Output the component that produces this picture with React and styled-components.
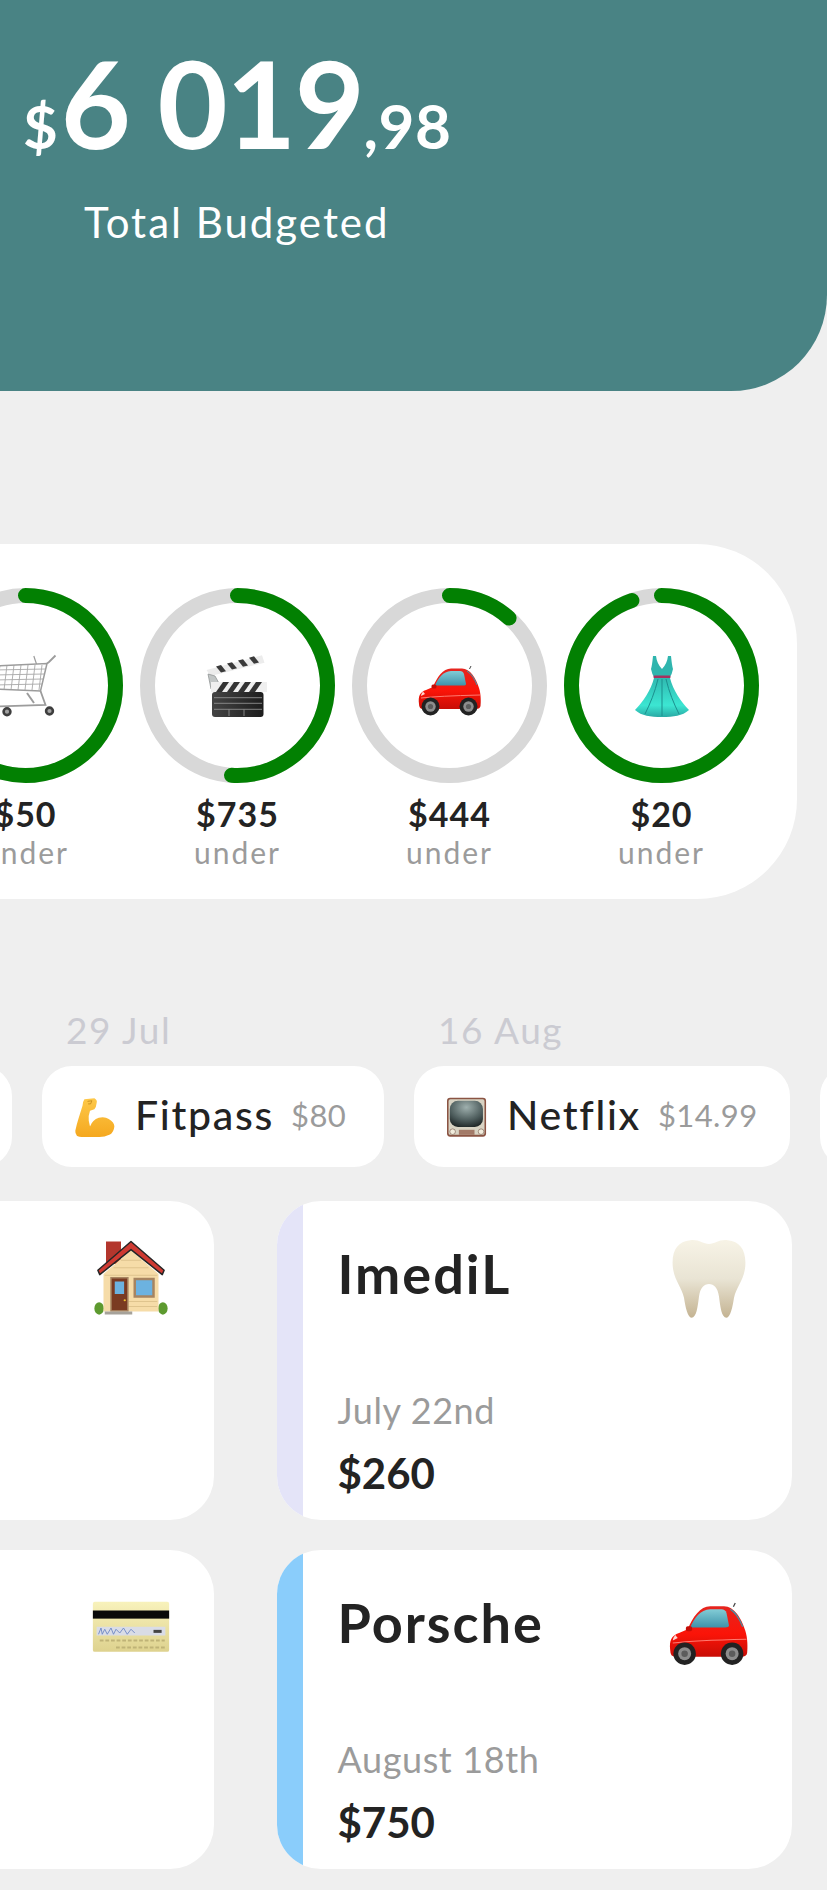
import React from 'react';
import styled, { createGlobalStyle } from 'styled-components';

const GlobalStyle = createGlobalStyle`
  html, body {
    margin: 0;
    padding: 0;
    background: #efefef;
    font-family: Lato, "Open Sans", sans-serif;
    overflow-x: hidden;
  }
`;

function CartIcon() {
  const bars = [0, 7, 14, 21, 28, 35, 42];
  const rows = [16, 21, 26, 31];
  return (
    <svg viewBox="0 0 64 64" width="100%" height="100%">
      <g fill="none" stroke="#a8a8a8" strokeWidth="0.9">
        {bars.map((x) => (
          <line key={x} x1={x + 6} y1="11" x2={x + 3} y2="36" />
        ))}
        {rows.map((y) => (
          <line key={y} x1="0" y1={y} x2={53 - (y - 10) * 0.25} y2={y - 1} />
        ))}
      </g>
      <g fill="none" stroke="#9c9c9c" strokeWidth="1.5">
        <path d="M0 12 L53 9.5 L46.5 37 L0 35" />
        <path d="M53 9.5 L55 8 L61.5 1.5" strokeWidth="1.8" />
        <path d="M39.8 2 L42.5 10" strokeWidth="1.2" />
        <path d="M46.5 37 L51.5 51 L0 52.5" strokeWidth="1.8" />
        <path d="M33 39 L40 49" strokeWidth="2" />
      </g>
      <g stroke="#3e3e3e" strokeWidth="2.6" fill="#a2a2a2">
        <circle cx="13" cy="57.7" r="3.4" />
        <circle cx="55.5" cy="57" r="3.4" />
      </g>
    </svg>
  );
}

function ClapperIcon() {
  const top = [10, 21, 32, 43];
  const band = [10, 21, 32, 43];
  return (
    <svg viewBox="0 0 64 64" width="100%" height="100%">
      <defs>
        <linearGradient id="clapBody" x1="0" x2="1" y1="0" y2="0">
          <stop offset="0" stopColor="#444" />
          <stop offset="1" stopColor="#1d1d1d" />
        </linearGradient>
      </defs>
      <polygon points="0.5,16 56,1.3 58.5,8.7 4.5,22" fill="#ececec" />
      {top.map((x) => {
        const y = 14 - (x - 4) * 0.265;
        return (
          <polygon
            key={x}
            points={`${x},${y} ${x + 5},${y - 1.3} ${x + 10},${y + 4.8} ${x + 5},${y + 6.1}`}
            fill="#3a3a3a"
          />
        );
      })}
      <polygon points="2,20 9,22 14.5,32 14,37 5,35" fill="#c2c6c6" stroke="#8a8e8e" strokeWidth="0.7" />
      <rect x="5" y="28" width="56" height="10" fill="#efefef" />
      {band.map((x) => (
        <polygon key={x} points={`${x},38 ${x + 6},38 ${x + 13},28 ${x + 7},28`} fill="#333" />
      ))}
      <rect x="6" y="38" width="51.5" height="25" rx="3" fill="url(#clapBody)" />
      <g stroke="#8f8f8f" strokeWidth="0.9">
        <line x1="8" y1="43.7" x2="56" y2="43.7" />
        <line x1="8" y1="49.3" x2="56" y2="49.3" />
        <line x1="8" y1="55.3" x2="56" y2="55.3" />
        <line x1="23" y1="55.3" x2="23" y2="62" />
        <line x1="38" y1="55.3" x2="38" y2="62" />
      </g>
    </svg>
  );
}

function CarIcon() {
  return (
    <svg viewBox="0 0 64 64" width="100%" height="100%">
      <defs>
        <linearGradient id="carBody" x1="0" x2="0" y1="0" y2="1">
          <stop offset="0" stopColor="#e5251f" />
          <stop offset="0.55" stopColor="#fb1408" />
          <stop offset="1" stopColor="#c80d06" />
        </linearGradient>
        <linearGradient id="carGlass" x1="0" x2="0" y1="0" y2="1">
          <stop offset="0" stopColor="#82ccd6" />
          <stop offset="1" stopColor="#3f93aa" />
        </linearGradient>
      </defs>
      <line x1="51.5" y1="15" x2="53" y2="12" stroke="#444" strokeWidth="1" />
      <path
        d="M1 50 C0 42 2 38 8 36 L15 33 C19 23 25 14.5 33 14.5 L44 14.5 C52 14.5 58 24 61 34 C63 40 63 48 62.5 52 Q62 55 58 55 L5 55 Q1 55 1 50 Z"
        fill="url(#carBody)"
      />
      <path
        d="M17 31.5 C20 24 25 17.5 33 17 L42 17 Q45 17 46 20 L48 30 Q48 31.5 45 31.5 Z"
        fill="url(#carGlass)"
      />
      <path d="M49 17 C54 20 57 26 59 31" fill="none" stroke="#3f93aa" strokeWidth="1" />
      <path d="M3 44 Q20 42 62 41" fill="none" stroke="#ff7a70" strokeWidth="1" />
      <path d="M5 37.5 Q3 40 3 42 L7 40 Z" fill="#ffd6d0" />
      <rect x="13.5" y="30.5" width="5" height="4" rx="1.5" fill="#c40d06" />
      <circle cx="12.5" cy="52.5" r="9" fill="#222" />
      <circle cx="12.5" cy="52.5" r="5.2" fill="#8d8d8d" />
      <circle cx="12.5" cy="52.5" r="2.6" fill="#5c5c5c" />
      <circle cx="50.5" cy="52.5" r="9" fill="#222" />
      <circle cx="50.5" cy="52.5" r="5.2" fill="#8d8d8d" />
      <circle cx="50.5" cy="52.5" r="2.6" fill="#5c5c5c" />
    </svg>
  );
}

function DressIcon() {
  return (
    <svg viewBox="0 0 64 64" width="100%" height="100%">
      <defs>
        <linearGradient id="dressSkirt" x1="0" x2="0" y1="0" y2="1">
          <stop offset="0" stopColor="#2fb9b0" />
          <stop offset="0.7" stopColor="#3ce6d2" />
          <stop offset="1" stopColor="#2aa9a4" />
        </linearGradient>
      </defs>
      <path
        d="M23 2 L26 2 Q27 10 32 15 Q37 10 38 2 L41 2 Q42 12 43 15 Q42 20 40 23 L24 23 Q22 20 21 15 Q22 12 23 2 Z"
        fill="#2fb5ae"
      />
      <rect x="23.5" y="21.5" width="17" height="2.8" rx="1" fill="#a8305f" />
      <path
        d="M24 24 L40 24 C43 36 51 48 59 56 C52 62 44 63 32 63 C20 63 12 62 5 56 C13 48 21 36 24 24 Z"
        fill="url(#dressSkirt)"
      />
      <g fill="none" stroke="#1c8f8e" strokeWidth="1">
        <path d="M28 25 C25 38 20 50 15 60" />
        <path d="M32 25 L32 62" />
        <path d="M36 25 C39 38 44 50 49 60" />
      </g>
    </svg>
  );
}

function MuscleIcon() {
  return (
    <svg viewBox="0 0 64 64" width="100%" height="100%">
      <defs>
        <linearGradient id="armFill" x1="0" x2="0" y1="0" y2="1">
          <stop offset="0" stopColor="#fdc849" />
          <stop offset="1" stopColor="#f5a81f" />
        </linearGradient>
      </defs>
      <path
        d="M15 3.5 L31 2 Q36 5 34.7 9 Q34 16 31 19.5 L24 22 Q21 30 22 38 L24 47 Q28 36 38 33 Q48 31 54 35 Q63 40 63 47 Q62 56 56 60 Q47 64 39 64 L15 64 Q5 64 3 62 Q0 58 0.5 54 Q3 42 6 33 L12 14 Q12 8 15 3.5 Z"
        fill="url(#armFill)"
      />
      <path d="M20 7 L27 6 L25 11 L21 11" fill="none" stroke="#b87d14" strokeWidth="1.1" />
    </svg>
  );
}

function TvIcon() {
  return (
    <svg viewBox="0 0 64 64" width="100%" height="100%">
      <defs>
        <radialGradient id="tvGlass" cx="0.5" cy="0.25" r="0.85">
          <stop offset="0" stopColor="#9fb0ae" />
          <stop offset="0.6" stopColor="#4b5a5a" />
          <stop offset="1" stopColor="#141a1a" />
        </radialGradient>
      </defs>
      <rect x="0" y="1" width="62.5" height="62.5" rx="5" fill="#8b5443" />
      <rect x="2.5" y="3.5" width="57.5" height="57" rx="3" fill="#d8d3c3" />
      <rect x="4.5" y="6" width="53" height="42" rx="13" fill="url(#tvGlass)" />
      <circle cx="9" cy="55.5" r="4.5" fill="#f1ecdc" stroke="#7a5f50" />
      <circle cx="54.5" cy="55.5" r="4.5" fill="#f1ecdc" stroke="#7a5f50" />
      <rect x="19" y="52.5" width="25" height="8" fill="#a37a68" />
    </svg>
  );
}

function HouseIcon() {
  return (
    <svg viewBox="0 0 64 64" width="100%" height="100%">
      <ellipse cx="6.5" cy="55.5" rx="3.8" ry="5" fill="#5d9a2f" />
      <ellipse cx="57.5" cy="55.5" rx="3.8" ry="5" fill="#5d9a2f" />
      <rect x="12" y="2" width="12" height="18" fill="#b3362d" />
      <path d="M32 9 L54 28 L54 58 L10 58 L10 28 Z" fill="#f6dca8" />
      <g stroke="#dcc08a" strokeWidth="0.7">
        <line x1="24" y1="17" x2="40" y2="17" />
        <line x1="18" y1="23" x2="46" y2="23" />
        <line x1="11" y1="29" x2="53" y2="29" />
        <line x1="30" y1="50" x2="53" y2="50" />
        <line x1="30" y1="54" x2="53" y2="54" />
      </g>
      <path
        d="M32 2 L58.5 25 L57 28.5 L32 8.5 L7 28.5 L5.5 25 Z"
        fill="#cf3a32"
        stroke="#262626"
        strokeWidth="1.2"
        strokeLinejoin="round"
      />
      <rect x="16" y="31" width="13.5" height="26.5" fill="#7a3a22" stroke="#a78460" strokeWidth="1.2" />
      <rect x="19" y="34" width="7.5" height="10" fill="#6cb2e0" />
      <circle cx="27" cy="49" r="0.9" fill="#f1c232" />
      <rect x="35" y="32" width="15" height="14" fill="#6cb2e0" stroke="#a78460" strokeWidth="2" />
      <rect x="11" y="58" width="22" height="2.4" fill="#a6a29a" />
    </svg>
  );
}

function ToothIcon() {
  return (
    <svg viewBox="0 0 64 64" width="100%" height="100%">
      <defs>
        <linearGradient id="toothFill" x1="0" x2="0" y1="0" y2="1">
          <stop offset="0" stopColor="#f7f3e6" />
          <stop offset="0.5" stopColor="#e9e4d4" />
          <stop offset="1" stopColor="#c4b392" />
        </linearGradient>
      </defs>
      <path
        d="M17 1 C24 0 27 4 32 4 C37 4 40 0 47 1 C57 2 62 9 61 22 C60 33 54 38 52 47 C51 54 49 63 46 63 C42 63 41 54 40 46 C39 39 36 36 32 36 C28 36 25 39 24 46 C23 54 22 63 18 63 C15 63 13 54 12 47 C10 38 4 33 3 22 C2 9 7 2 17 1 Z"
        fill="url(#toothFill)"
      />
    </svg>
  );
}

function CreditCardIcon() {
  return (
    <svg viewBox="0 0 64 64" width="100%" height="100%">
      <defs>
        <linearGradient id="cardFill" x1="0" x2="0" y1="0" y2="1">
          <stop offset="0" stopColor="#f8f2bb" />
          <stop offset="1" stopColor="#ded28e" />
        </linearGradient>
      </defs>
      <rect x="1.5" y="11" width="61" height="40" rx="1.5" fill="url(#cardFill)" />
      <rect x="1.5" y="18" width="61" height="6.5" fill="#0a0a0a" />
      <rect x="4.5" y="31" width="55" height="7" fill="#d9dce6" />
      <path
        d="M6 37 L8 32 L9 37 L11 33 L13 37 L16 32 L18 37 L20 33 L23 36 L26 32 L29 37 L32 33 L35 36"
        fill="none"
        stroke="#6c86c4"
        strokeWidth="0.7"
      />
      <rect x="50" y="33.5" width="6.5" height="2.4" fill="#444" />
      <g stroke="#bfb377" strokeWidth="1.6" strokeDasharray="3 1.5">
        <line x1="7" y1="42" x2="59" y2="42" />
        <line x1="20" y1="47.5" x2="59" y2="47.5" />
      </g>
    </svg>
  );
}

const RINGS = [
  { amount: '$50', progress: 0.8, Icon: CartIcon },
  { amount: '$735', progress: 0.51, Icon: ClapperIcon },
  { amount: '$444', progress: 0.115, Icon: CarIcon },
  { amount: '$20', progress: 0.945, Icon: DressIcon },
];

const CIRCUMFERENCE = 2 * Math.PI * 90;

const Page = styled.div`
  width: 827px;
  height: 1890px;
  overflow: hidden;
  background: #efefef;
`;

const Header = styled.header`
  height: 391px;
  box-sizing: border-box;
  padding: 40px 0 0 23px;
  background: #498384;
  border-bottom-right-radius: 96px;
  color: #fff;
`;

const Amount = styled.div`
  display: flex;
  align-items: baseline;
  height: 125px;
  line-height: 125px;
  font-weight: 700;
`;

const Currency = styled.span`
  font-size: 60px;
`;

const Whole = styled.span`
  margin-left: 3px;
  font-size: 121px;
  letter-spacing: -1.5px;
`;

const Cents = styled.span`
  font-size: 62px;
  letter-spacing: 0.5px;
`;

const AmountLabel = styled.div`
  margin: 32px 0 0 61px;
  font-size: 42px;
  line-height: 50px;
  letter-spacing: 2px;
`;

const BudgetPanel = styled.section`
  display: flex;
  gap: 17px;
  width: max-content;
  margin: 153px 0 0 -110px;
  padding: 44px 38px 0;
  height: 355px;
  box-sizing: border-box;
  background: #fff;
  border-radius: 100px;
`;

const BudgetItem = styled.div`
  display: flex;
  flex-direction: column;
  align-items: center;
  width: 195px;
`;

const Ring = styled.div`
  position: relative;
  width: 195px;
  height: 195px;
`;

const RingIcon = styled.div`
  position: absolute;
  top: 66px;
  left: 65.5px;
  width: 64px;
  height: 64px;
`;

const BudgetAmount = styled.div`
  margin-top: 8px;
  font-size: 34px;
  line-height: 46px;
  font-weight: 700;
  letter-spacing: 1px;
  color: #232323;
`;

const BudgetNote = styled.div`
  font-size: 30px;
  line-height: 30px;
  letter-spacing: 2px;
  color: #9b9b9b;
`;

const BillsRow = styled.section`
  display: flex;
  gap: 30px;
  width: max-content;
  margin: 107px 0 0 -300px;
`;

const BillColumn = styled.div`
  display: flex;
  flex-direction: column;
`;

const BillDate = styled.div`
  height: 60px;
  padding-left: 24px;
  font-size: 37px;
  line-height: 48px;
  letter-spacing: 1.6px;
  color: #cbcbd2;
`;

const BillPill = styled.div`
  display: flex;
  align-items: center;
  box-sizing: border-box;
  width: ${({ $width }) => $width}px;
  height: 101px;
  padding: 0 0 4px 33px;
  background: #fff;
  border-radius: 30px;
`;

const BillIcon = styled.div`
  width: 40px;
  height: 40px;
  flex: none;
  margin-top: 4px;
`;

const BillName = styled.span`
  margin-left: 20px;
  font-size: 41px;
  font-weight: 500;
  letter-spacing: 1.7px;
  color: #232323;
`;

const BillPrice = styled.span`
  margin-left: 17px;
  font-size: 31px;
  letter-spacing: 0.4px;
  color: #9b9b9b;
`;

const CardGrid = styled.section`
  display: grid;
  grid-template-columns: 515px 515px;
  grid-auto-rows: 319px;
  gap: 30px 63px;
  width: max-content;
  margin: 34px 0 0 -301px;
`;

const Card = styled.article`
  display: flex;
  overflow: hidden;
  background: #fff;
  border-radius: 44px;
`;

const CardStrip = styled.div`
  width: 26px;
  flex: none;
  background: ${({ $color }) => $color};
`;

const CardBody = styled.div`
  flex: 1;
  display: flex;
  flex-direction: column;
  padding: 38px 43.5px 0 34.5px;
`;

const CardTop = styled.div`
  display: flex;
  justify-content: space-between;
  align-items: flex-start;
  height: 145px;
`;

const CardTitle = styled.h3`
  margin: 0;
  font-size: 54px;
  line-height: 70px;
  font-weight: 700;
  letter-spacing: 2px;
  color: #232323;
`;

const CardIcon = styled.div`
  width: 80px;
  height: 80px;
  margin-left: auto;
`;

const CardDate = styled.div`
  font-size: 36px;
  line-height: 52px;
  letter-spacing: 0.6px;
  color: #9b9b9b;
`;

const CardAmount = styled.div`
  margin-top: 9px;
  font-size: 42px;
  line-height: 56px;
  font-weight: 700;
  color: #232323;
`;

export default function App() {
  return (
    <Page>
      <GlobalStyle />
      <Header>
        <Amount>
          <Currency>$</Currency>
          <Whole>6 019</Whole>
          <Cents>,98</Cents>
        </Amount>
        <AmountLabel>Total Budgeted</AmountLabel>
      </Header>

      <BudgetPanel>
        {RINGS.map(({ amount, progress, Icon }) => (
          <BudgetItem key={amount}>
            <Ring>
              <svg width="195" height="195" viewBox="0 0 195 195">
                <circle cx="97.5" cy="97.5" r="90" fill="none" stroke="#d8d8d8" strokeWidth="15" />
                <circle
                  cx="97.5"
                  cy="97.5"
                  r="90"
                  fill="none"
                  stroke="#028002"
                  strokeWidth="15"
                  strokeLinecap="round"
                  strokeDasharray={`${CIRCUMFERENCE * progress} ${CIRCUMFERENCE}`}
                  transform="rotate(-90 97.5 97.5)"
                />
              </svg>
              <RingIcon>
                <Icon />
              </RingIcon>
            </Ring>
            <BudgetAmount>{amount}</BudgetAmount>
            <BudgetNote>under</BudgetNote>
          </BudgetItem>
        ))}
      </BudgetPanel>

      <BillsRow>
        <BillColumn>
          <BillDate>&nbsp;</BillDate>
          <BillPill $width={312} />
        </BillColumn>
        <BillColumn>
          <BillDate>29 Jul</BillDate>
          <BillPill $width={342}>
            <BillIcon>
              <MuscleIcon />
            </BillIcon>
            <BillName>Fitpass</BillName>
            <BillPrice>$80</BillPrice>
          </BillPill>
        </BillColumn>
        <BillColumn>
          <BillDate>16 Aug</BillDate>
          <BillPill $width={376}>
            <BillIcon>
              <TvIcon />
            </BillIcon>
            <BillName>Netflix</BillName>
            <BillPrice>$14.99</BillPrice>
          </BillPill>
        </BillColumn>
        <BillColumn>
          <BillDate>&nbsp;</BillDate>
          <BillPill $width={300} />
        </BillColumn>
      </BillsRow>

      <CardGrid>
        <Card>
          <CardBody>
            <CardTop>
              <CardIcon>
                <HouseIcon />
              </CardIcon>
            </CardTop>
          </CardBody>
        </Card>
        <Card>
          <CardStrip $color="#e4e4f8" />
          <CardBody>
            <CardTop>
              <CardTitle>ImediL</CardTitle>
              <CardIcon>
                <ToothIcon />
              </CardIcon>
            </CardTop>
            <CardDate>July 22nd</CardDate>
            <CardAmount>$260</CardAmount>
          </CardBody>
        </Card>
        <Card>
          <CardBody>
            <CardTop>
              <CardIcon>
                <CreditCardIcon />
              </CardIcon>
            </CardTop>
          </CardBody>
        </Card>
        <Card>
          <CardStrip $color="#8acdfb" />
          <CardBody>
            <CardTop>
              <CardTitle>Porsche</CardTitle>
              <CardIcon>
                <CarIcon />
              </CardIcon>
            </CardTop>
            <CardDate>August 18th</CardDate>
            <CardAmount>$750</CardAmount>
          </CardBody>
        </Card>
      </CardGrid>
    </Page>
  );
}
